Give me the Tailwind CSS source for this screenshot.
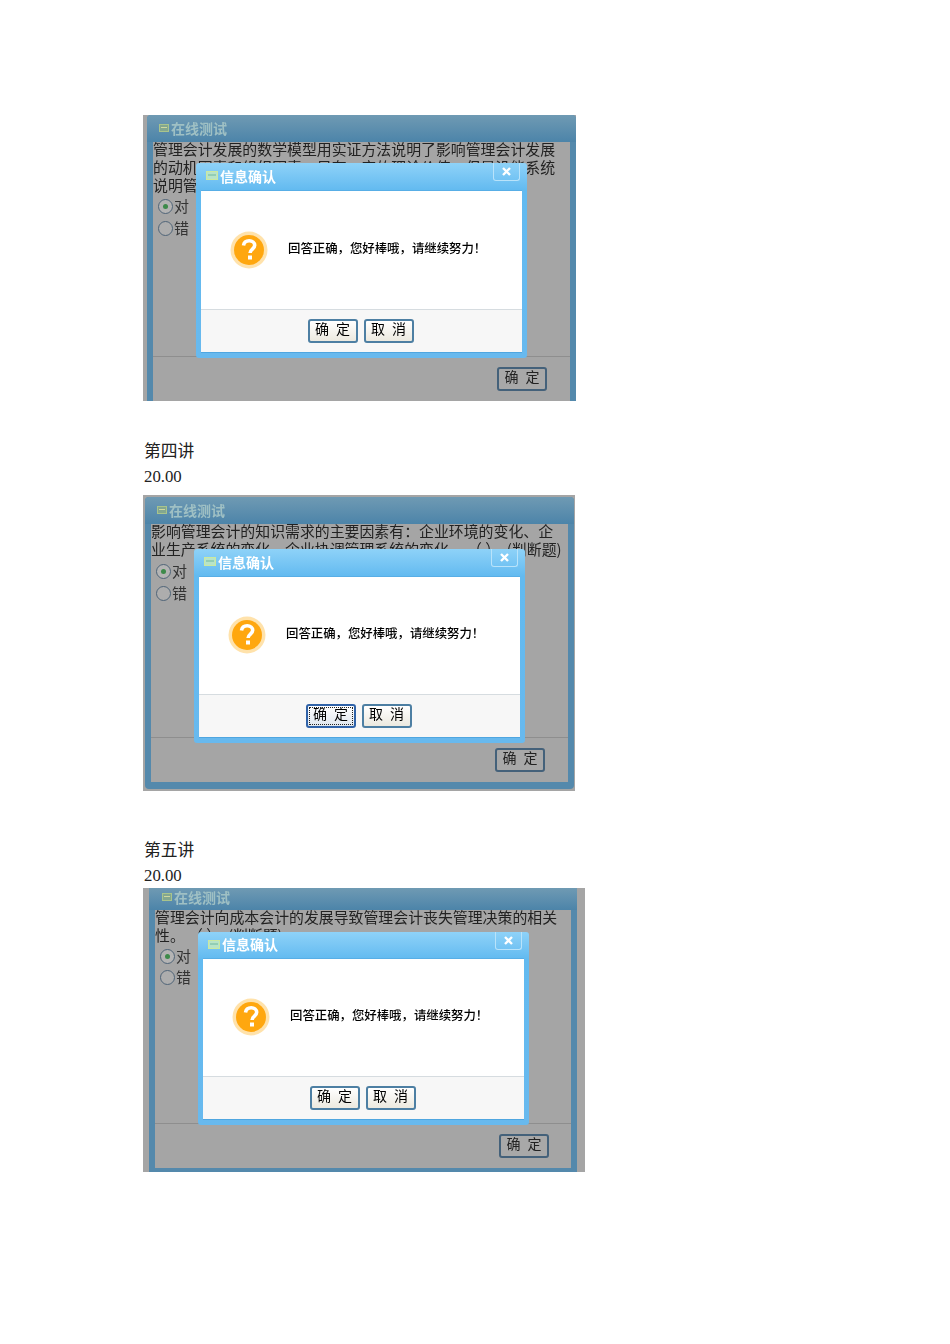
<!DOCTYPE html>
<html lang="zh-CN">
<head>
    <meta charset="UTF-8">
    <title>在线测试</title>
    <script src="https://cdn.jsdelivr.net/npm/@tailwindcss/browser@4"></script>
</head>
<body class="bg-white text-[#222] [font-family:'Liberation_Serif','Noto_Sans_CJK_SC',serif]">
<div class="w-[950px] h-[1344px] pt-[115px] pl-[143px] overflow-hidden">

    <!-- 第三讲 截图 -->
    <div class="relative w-[433px] h-[286px] bg-[#a5a5a5] pl-[4px] overflow-hidden blur-[0.3px]">
        <div class="flex flex-col w-[429px] h-[300px] rounded-t-[4px] overflow-hidden bg-[#5489ac]">
            <div class="flex items-center h-[27px] pl-[12px] pb-[1px] gap-[2px] bg-gradient-to-b from-[#6f9ab3] to-[#4c84a9] shrink-0">
                <svg width="10" height="8" viewBox="0 0 10 8"><rect x="0.5" y="0.5" width="9" height="7" fill="#83a78f" stroke="#a8c48c"/><path d="M2 3.5h6" stroke="#d0d8a0"/></svg>
                <span class="text-[14px] font-bold text-[#9fc0c4] [font-family:'Noto_Sans_CJK_SC',sans-serif]">在线测试</span>
            </div>
            <div class="flex flex-col h-[273px] mx-[6px] bg-[#a5a5a5] [font-family:'Noto_Sans_CJK_SC',sans-serif]">
                <div class="h-[215px] border-b border-[#8e8e8e]">
                    <p class="-mt-[2px] mb-[1px] w-[408px] text-[14.9px] leading-[18px] text-[#222]">管理会计发展的数学模型用实证方法说明了影响管理会计发展的动机因素和组织因素，只有一定的理论价值，但是没能系统说明管理会计的发展。</p>
                    <div class="flex items-center h-[22px] pl-[5px] gap-[1px] text-[15px] text-[#333]">
                        <span class="flex items-center justify-center w-[15px] h-[15px] rounded-full border border-[#4f6478] bg-[#b4b4b4]"><span class="w-[5px] h-[5px] rounded-full bg-[#3d8a4a]"></span></span>对
                    </div>
                    <div class="flex items-center h-[22px] pl-[5px] gap-[1px] text-[15px] text-[#333]">
                        <span class="w-[15px] h-[15px] rounded-full border border-[#4f6478] bg-[#adadad]"></span>错
                    </div>
                </div>
                <div class="flex justify-end pt-[10px] pr-[23px]">
                    <button class="w-[50px] h-[24px] pb-[6px] leading-none rounded-[3px] border-2 border-[#44617a] bg-[#a8a8a8] text-[14px] text-[#222] [word-spacing:4px]">确 定</button>
                </div>
            </div>
        </div>
        <!-- 弹窗 -->
        <div class="absolute left-[53px] top-[48px] w-[331px] h-[195px] flex flex-col px-[5px] pb-[5px] rounded-[3px] bg-gradient-to-b from-[#8ed2f8] via-[#62baf0] via-[14%] to-[#68b9ee] [font-family:'Noto_Sans_CJK_SC',sans-serif]">
            <div class="relative flex items-center h-[27px] pl-[5px] pb-[2px] gap-[2px] shrink-0">
                <svg width="12" height="9" viewBox="0 0 12 9"><rect x="0.5" y="0.5" width="11" height="8" fill="#b7e4c8" stroke="#cbe9a0"/><path d="M2 4h8" stroke="#6fb8a0"/></svg>
                <span class="text-[14px] leading-none font-bold text-white">信息确认</span>
                <button class="absolute right-[2px] top-0 flex items-center justify-center w-[27px] h-[18px] rounded-b-[3px] border border-t-0 border-[#b9e3fa]"><svg width="9" height="9" viewBox="0 0 9 9"><path d="M1 1l7 7M8 1l-7 7" stroke="#fff" stroke-width="2.4"/></svg></button>
            </div>
            <div class="flex items-center h-[119px] pl-[29px] pb-[4px] gap-[20px] bg-white border-t border-[#58aee6] shrink-0">
                <svg width="38" height="38" viewBox="0 0 38 38" class="shrink-0 mt-[3px]"><circle cx="19" cy="19" r="18.5" fill="#ffe2ab"/><circle cx="19" cy="19" r="15" fill="#ffa70f"/><path d="M13.5 14.5c.5-3.2 2.8-4.7 5.7-4.7 3.2 0 5.5 1.8 5.5 4.5 0 3.7-4.6 3.9-4.6 7.7" fill="none" stroke="#fff" stroke-width="3.6"/><rect x="18" y="24.5" width="4" height="4" fill="#fff"/></svg>
                <span class="text-[12.4px] font-medium text-black whitespace-nowrap">回答正确，您好棒哦，请继续努力！</span>
            </div>
            <div class="flex justify-center flex-1 gap-[6px] pt-[9px] pr-[2px] bg-[#f7f7f7] border-t border-[#d6dce0] border-b border-b-[#4fa6e0]">
                <button class="w-[50px] h-[24px] pb-[6px] leading-none rounded-[3px] border-2 border-[#4d7fa3] bg-gradient-to-b from-white to-[#ece9df] text-[14px] text-black [word-spacing:4px]">确 定</button>
                <button class="w-[50px] h-[24px] pb-[6px] leading-none rounded-[3px] border-2 border-[#4d7fa3] bg-gradient-to-b from-white to-[#ece9df] text-[14px] text-black [word-spacing:4px]">取 消</button>
            </div>
        </div>
    </div>

    <div class="mt-[38px] pl-[1px] text-[16.8px] leading-[25px] text-[#222]">第四讲</div>
    <div class="pl-[1px] text-[16.8px] leading-[25px] text-[#222]">20.00</div>

    <!-- 第四讲 截图 -->
    <div class="relative mt-[6px] w-[432px] h-[296px] bg-[#a5a5a5] p-[2px] overflow-hidden blur-[0.3px]">
        <div class="flex flex-col w-[429px] h-[292px] rounded-[4px] overflow-hidden bg-[#5489ac]">
            <div class="flex items-center h-[27px] pl-[12px] pb-[1px] gap-[2px] bg-gradient-to-b from-[#6f9ab3] to-[#4c84a9] shrink-0">
                <svg width="10" height="8" viewBox="0 0 10 8"><rect x="0.5" y="0.5" width="9" height="7" fill="#83a78f" stroke="#a8c48c"/><path d="M2 3.5h6" stroke="#d0d8a0"/></svg>
                <span class="text-[14px] font-bold text-[#9fc0c4] [font-family:'Noto_Sans_CJK_SC',sans-serif]">在线测试</span>
            </div>
            <div class="flex flex-col h-[258px] mx-[6px] bg-[#a5a5a5] [font-family:'Noto_Sans_CJK_SC',sans-serif]">
                <div class="h-[214px] border-b border-[#8e8e8e]">
                    <p class="-mt-[2px] mb-[2px] w-[416px] text-[14.9px] leading-[18px] text-[#222]">影响管理会计的知识需求的主要因素有：企业环境的变化、企业生产系统的变化、企业协调管理系统的变化。&nbsp;（ ）&nbsp;&nbsp;(判断题)</p>
                    <div class="flex items-center h-[22px] pl-[5px] gap-[1px] text-[15px] text-[#333]">
                        <span class="flex items-center justify-center w-[15px] h-[15px] rounded-full border border-[#4f6478] bg-[#b4b4b4]"><span class="w-[5px] h-[5px] rounded-full bg-[#3d8a4a]"></span></span>对
                    </div>
                    <div class="flex items-center h-[22px] pl-[5px] gap-[1px] text-[15px] text-[#333]">
                        <span class="w-[15px] h-[15px] rounded-full border border-[#4f6478] bg-[#adadad]"></span>错
                    </div>
                </div>
                <div class="flex justify-end pt-[10px] pr-[23px]">
                    <button class="w-[50px] h-[24px] pb-[6px] leading-none rounded-[3px] border-2 border-[#44617a] bg-[#a8a8a8] text-[14px] text-[#222] [word-spacing:4px]">确 定</button>
                </div>
            </div>
        </div>
        <!-- 弹窗 -->
        <div class="absolute left-[51px] top-[54px] w-[331px] h-[194px] flex flex-col px-[5px] pb-[5px] rounded-[3px] bg-gradient-to-b from-[#8ed2f8] via-[#62baf0] via-[14%] to-[#68b9ee] [font-family:'Noto_Sans_CJK_SC',sans-serif]">
            <div class="relative flex items-center h-[27px] pl-[5px] pb-[2px] gap-[2px] shrink-0">
                <svg width="12" height="9" viewBox="0 0 12 9"><rect x="0.5" y="0.5" width="11" height="8" fill="#b7e4c8" stroke="#cbe9a0"/><path d="M2 4h8" stroke="#6fb8a0"/></svg>
                <span class="text-[14px] leading-none font-bold text-white">信息确认</span>
                <button class="absolute right-[2px] top-0 flex items-center justify-center w-[27px] h-[18px] rounded-b-[3px] border border-t-0 border-[#b9e3fa]"><svg width="9" height="9" viewBox="0 0 9 9"><path d="M1 1l7 7M8 1l-7 7" stroke="#fff" stroke-width="2.4"/></svg></button>
            </div>
            <div class="flex items-center h-[118px] pl-[29px] pb-[4px] gap-[20px] bg-white border-t border-[#58aee6] shrink-0">
                <svg width="38" height="38" viewBox="0 0 38 38" class="shrink-0 mt-[3px]"><circle cx="19" cy="19" r="18.5" fill="#ffe2ab"/><circle cx="19" cy="19" r="15" fill="#ffa70f"/><path d="M13.5 14.5c.5-3.2 2.8-4.7 5.7-4.7 3.2 0 5.5 1.8 5.5 4.5 0 3.7-4.6 3.9-4.6 7.7" fill="none" stroke="#fff" stroke-width="3.6"/><rect x="18" y="24.5" width="4" height="4" fill="#fff"/></svg>
                <span class="text-[12.4px] font-medium text-black whitespace-nowrap">回答正确，您好棒哦，请继续努力！</span>
            </div>
            <div class="flex justify-center flex-1 gap-[6px] pt-[9px] pr-[2px] bg-[#f7f7f7] border-t border-[#d6dce0] border-b border-b-[#4fa6e0]">
                <button class="w-[50px] h-[24px] pb-[6px] leading-none rounded-[3px] border-2 border-[#2f62a8] bg-gradient-to-b from-white to-[#dfe6ee] outline-1 outline-dotted -outline-offset-4 outline-[#222] text-[14px] text-black [word-spacing:4px]">确 定</button>
                <button class="w-[50px] h-[24px] pb-[6px] leading-none rounded-[3px] border-2 border-[#4d7fa3] bg-gradient-to-b from-white to-[#ece9df] text-[14px] text-black [word-spacing:4px]">取 消</button>
            </div>
        </div>
    </div>

    <div class="mt-[47px] pl-[1px] text-[16.8px] leading-[25px] text-[#222]">第五讲</div>
    <div class="pl-[1px] text-[16.8px] leading-[25px] text-[#222]">20.00</div>

    <!-- 第五讲 截图 -->
    <div class="relative w-[442px] h-[284px] bg-[#a5a5a5] pl-[6px] overflow-hidden blur-[0.3px]">
        <div class="flex flex-col w-[428px] h-[284px] bg-[#5489ac]">
            <div class="flex items-center h-[22px] pl-[13px] pb-[4px] gap-[2px] bg-gradient-to-b from-[#6f9ab3] to-[#4c84a9] shrink-0">
                <svg width="10" height="8" viewBox="0 0 10 8"><rect x="0.5" y="0.5" width="9" height="7" fill="#83a78f" stroke="#a8c48c"/><path d="M2 3.5h6" stroke="#d0d8a0"/></svg>
                <span class="text-[14px] font-bold text-[#9fc0c4] [font-family:'Noto_Sans_CJK_SC',sans-serif]">在线测试</span>
            </div>
            <div class="flex flex-col h-[258px] mx-[6px] bg-[#a5a5a5] [font-family:'Noto_Sans_CJK_SC',sans-serif]">
                <div class="h-[214px] border-b border-[#8e8e8e]">
                    <p class="-mt-[2px] mb-[1px] w-[416px] text-[14.9px] leading-[18px] text-[#222]">管理会计向成本会计的发展导致管理会计丧失管理决策的相关性。&nbsp;（ ）&nbsp;&nbsp;(判断题)</p>
                    <div class="flex items-center h-[22px] pl-[5px] gap-[1px] text-[15px] text-[#333]">
                        <span class="flex items-center justify-center w-[15px] h-[15px] rounded-full border border-[#4f6478] bg-[#b4b4b4]"><span class="w-[5px] h-[5px] rounded-full bg-[#3d8a4a]"></span></span>对
                    </div>
                    <div class="flex items-center h-[21px] pl-[5px] gap-[1px] text-[15px] text-[#333]">
                        <span class="w-[15px] h-[15px] rounded-full border border-[#4f6478] bg-[#adadad]"></span>错
                    </div>
                </div>
                <div class="flex justify-end pt-[10px] pr-[22px]">
                    <button class="w-[50px] h-[24px] pb-[6px] leading-none rounded-[3px] border-2 border-[#44617a] bg-[#a8a8a8] text-[14px] text-[#222] [word-spacing:4px]">确 定</button>
                </div>
            </div>
        </div>
        <!-- 弹窗 -->
        <div class="absolute left-[55px] top-[44px] w-[331px] h-[193px] flex flex-col px-[5px] pb-[5px] rounded-[3px] bg-gradient-to-b from-[#8ed2f8] via-[#62baf0] via-[14%] to-[#68b9ee] [font-family:'Noto_Sans_CJK_SC',sans-serif]">
            <div class="relative flex items-center h-[26px] pl-[5px] pb-[2px] gap-[2px] shrink-0">
                <svg width="12" height="9" viewBox="0 0 12 9"><rect x="0.5" y="0.5" width="11" height="8" fill="#b7e4c8" stroke="#cbe9a0"/><path d="M2 4h8" stroke="#6fb8a0"/></svg>
                <span class="text-[14px] leading-none font-bold text-white">信息确认</span>
                <button class="absolute right-[2px] top-0 flex items-center justify-center w-[27px] h-[18px] rounded-b-[3px] border border-t-0 border-[#b9e3fa]"><svg width="9" height="9" viewBox="0 0 9 9"><path d="M1 1l7 7M8 1l-7 7" stroke="#fff" stroke-width="2.4"/></svg></button>
            </div>
            <div class="flex items-center h-[118px] pl-[29px] pb-[4px] gap-[20px] bg-white border-t border-[#58aee6] shrink-0">
                <svg width="38" height="38" viewBox="0 0 38 38" class="shrink-0 mt-[3px]"><circle cx="19" cy="19" r="18.5" fill="#ffe2ab"/><circle cx="19" cy="19" r="15" fill="#ffa70f"/><path d="M13.5 14.5c.5-3.2 2.8-4.7 5.7-4.7 3.2 0 5.5 1.8 5.5 4.5 0 3.7-4.6 3.9-4.6 7.7" fill="none" stroke="#fff" stroke-width="3.6"/><rect x="18" y="24.5" width="4" height="4" fill="#fff"/></svg>
                <span class="text-[12.4px] font-medium text-black whitespace-nowrap">回答正确，您好棒哦，请继续努力！</span>
            </div>
            <div class="flex justify-center flex-1 gap-[6px] pt-[9px] pr-[2px] bg-[#f7f7f7] border-t border-[#d6dce0] border-b border-b-[#4fa6e0]">
                <button class="w-[50px] h-[24px] pb-[6px] leading-none rounded-[3px] border-2 border-[#4d7fa3] bg-gradient-to-b from-white to-[#ece9df] text-[14px] text-black [word-spacing:4px]">确 定</button>
                <button class="w-[50px] h-[24px] pb-[6px] leading-none rounded-[3px] border-2 border-[#4d7fa3] bg-gradient-to-b from-white to-[#ece9df] text-[14px] text-black [word-spacing:4px]">取 消</button>
            </div>
        </div>
    </div>

</div>
</body>
</html>
